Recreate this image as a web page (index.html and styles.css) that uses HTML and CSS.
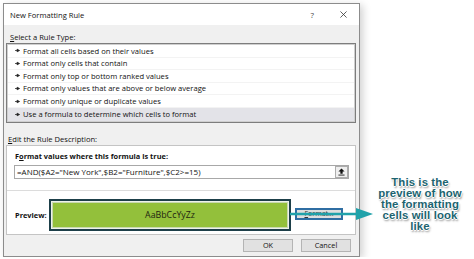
FILE: index.html
```html
<!DOCTYPE html>
<html lang="en">
<head>
  <meta charset="UTF-8">
  <title>New Formatting Rule</title>
  <link rel="stylesheet" href="styles.css">
</head>
<body>
  <div class="stage">
    <div class="dialog">
      <div class="titlebar">
        <span class="title">New Formatting Rule</span>
        <span class="help">?</span>
        <svg class="close" viewBox="0 0 8 8"><path d="M0.5 0.5L7.5 7.5M7.5 0.5L0.5 7.5"/></svg>
      </div>

      <div class="content">
        <div class="label"><u>S</u>elect a Rule Type:</div>
        <ul class="rule-list">
          <li class="rule"><svg class="bullet" viewBox="0 0 6 5"><path d="M0 2.5h3"/><polygon points="2.5,0.9 5.5,2.5 2.5,4.1"/></svg>Format all cells based on their values</li>
          <li class="rule"><svg class="bullet" viewBox="0 0 6 5"><path d="M0 2.5h3"/><polygon points="2.5,0.9 5.5,2.5 2.5,4.1"/></svg>Format only cells that contain</li>
          <li class="rule"><svg class="bullet" viewBox="0 0 6 5"><path d="M0 2.5h3"/><polygon points="2.5,0.9 5.5,2.5 2.5,4.1"/></svg>Format only top or bottom ranked values</li>
          <li class="rule"><svg class="bullet" viewBox="0 0 6 5"><path d="M0 2.5h3"/><polygon points="2.5,0.9 5.5,2.5 2.5,4.1"/></svg>Format only values that are above or below average</li>
          <li class="rule"><svg class="bullet" viewBox="0 0 6 5"><path d="M0 2.5h3"/><polygon points="2.5,0.9 5.5,2.5 2.5,4.1"/></svg>Format only unique or duplicate values</li>
          <li class="rule selected"><svg class="bullet" viewBox="0 0 6 5"><path d="M0 2.5h3"/><polygon points="2.5,0.9 5.5,2.5 2.5,4.1"/></svg>Use a formula to determine which cells to format</li>
        </ul>

        <div class="label edit-label"><u>E</u>dit the Rule Description:</div>
        <div class="group">
          <div class="formula-section">
            <div class="group-title">F<u>o</u>rmat values where this formula is true:</div>
            <div class="formula-input">
              <span class="formula">=AND($A2="New York",$B2="Furniture",$C2&gt;=15)</span>
              <span class="ref-btn">
                <svg viewBox="0 0 8 9"><polygon points="4,0.5 7.5,4 5.3,4 5.3,6.5 2.7,6.5 2.7,4 0.5,4"/><rect x="0.5" y="7.5" width="7" height="1"/></svg>
              </span>
            </div>
          </div>
          <div class="preview-section">
            <span class="preview-label">Preview:</span>
            <div class="preview-box"><div class="preview-sample">AaBbCcYyZz</div></div>
            <span class="format-btn"><u>F</u>ormat...</span>
          </div>
        </div>

        <div class="actions">
          <span class="btn">OK</span>
          <span class="btn">Cancel</span>
        </div>
      </div>
    </div>

    <div class="callout">This is the<br>preview of how<br>the formatting<br>cells will look<br>like</div>

    <svg class="pointer" viewBox="0 0 84 16"><path d="M0 8H70"/><polygon points="66,2 83,8 66,14"/></svg>
  </div>
</body>
</html>
```
FILE: styles.css
```css
body {
  margin: 0;
  background: #fff;
  font-family: "Open Sans", "Noto Sans", sans-serif;
  color: #111;
}

.stage {
  position: relative;
  display: flex;
  padding: 3px 0 0 3px;
}

.dialog {
  width: 355px;
  height: 252px;
  border: 1px solid #8c8c8c;
  background: #f0f0f0;
  box-shadow: 3px 2px 8px rgba(0, 0, 0, 0.18);
  display: flex;
  flex-direction: column;
}

.titlebar {
  height: 21px;
  background: #fff;
  display: flex;
  align-items: center;
  padding-left: 6px;
  font-size: 7.6px;
}

.title {
  flex: 1;
}

.help {
  font-size: 8px;
  color: #444;
  margin-right: 26px;
}

.close {
  width: 7px;
  height: 7px;
  margin-right: 12px;
  stroke: #333;
  stroke-width: 0.9;
  fill: none;
}

.content {
  flex: 1;
  padding: 6px 3px 0 2px;
  font-size: 7.6px;
}

.label {
  height: 12px;
  line-height: 12px;
  padding-left: 4px;
}

.edit-label {
  margin-top: 10px;
  padding-left: 2px;
}

.rule-list {
  list-style: none;
  margin: 0;
  background: #fff;
  border: 1px solid #7d7d7d;
  box-shadow: inset 0 0 0 1px #cfcfcf;
  padding: 1px;
}

.rule {
  height: 12.6px;
  line-height: 12.6px;
  display: flex;
  align-items: center;
  padding-left: 7px;
  border-bottom: 1px solid #f3f3f3;
  box-sizing: border-box;
}

.rule:last-child {
  border-bottom: none;
}

.rule.selected {
  background: #e3e3e8;
}

.bullet {
  width: 5px;
  height: 5px;
  margin-right: 3px;
  stroke: #222;
  stroke-width: 0.9;
  fill: #222;
}

.group {
  background: #fff;
  border: 1px solid #c4c4c4;
  height: 88px;
  display: flex;
  flex-direction: column;
}

.formula-section {
  padding: 4px 6px 11px 7px;
  border-bottom: 1px solid #dcdcdc;
}

.group-title {
  font-weight: 700;
  font-size: 7.4px;
  line-height: 12px;
  padding-left: 1px;
}

.formula-input {
  margin-top: 3px;
  height: 14px;
  border: 1px solid #a8a8a8;
  box-sizing: border-box;
  display: flex;
  align-items: center;
  padding-left: 2px;
  font-size: 8px;
}

.formula {
  flex: 1;
}

.ref-btn {
  width: 13px;
  height: 12px;
  border: 1px solid #adadad;
  background: #efefef;
  box-sizing: border-box;
  display: flex;
  align-items: center;
  justify-content: center;
}

.ref-btn svg {
  width: 7px;
  height: 8px;
  fill: #111;
}

.preview-section {
  flex: 1;
  display: flex;
  align-items: center;
  padding: 6px 0 0 8px;
}

.preview-label {
  font-weight: 700;
  font-size: 7.4px;
  width: 34px;
}

.preview-box {
  width: 242px;
  height: 32px;
  box-sizing: border-box;
  border: 2px solid #1d3f49;
  padding: 1px;
  background: #eef2ea;
}

.preview-sample {
  height: 100%;
  background: #93c03b;
  border: 1px solid #c9d9b0;
  box-sizing: border-box;
  display: flex;
  align-items: center;
  justify-content: center;
  font-size: 8.8px;
  color: #1e2410;
}

.format-btn {
  margin-left: 4px;
  margin-top: -3px;
  width: 48px;
  height: 12px;
  box-sizing: border-box;
  border: 2px solid #2f6ea3;
  background: #dedede;
  font-size: 7px;
  line-height: 8px;
  text-align: center;
  color: #333;
}

.actions {
  display: flex;
  justify-content: flex-end;
  gap: 8px;
  padding: 4px 5px 0 0;
}

.btn {
  width: 50px;
  height: 13px;
  box-sizing: border-box;
  border: 1px solid #b4b4b4;
  background: #e1e1e1;
  text-align: center;
  line-height: 11px;
  font-size: 7.3px;
}

.callout {
  flex: 1;
  align-self: flex-start;
  margin-top: 174px;
  padding-left: 6px;
  text-align: center;
  font-family: "Liberation Sans", Arial, sans-serif;
  font-weight: 700;
  font-size: 11.4px;
  line-height: 11px;
  letter-spacing: 0.1px;
  color: #1c6470;
  text-shadow: -1px 0 #fff, 1px 0 #fff, 0 -1px #fff, 0 1px #fff, 1px 2px 2px rgba(0, 0, 0, 0.45);
}

.pointer {
  position: absolute;
  left: 290px;
  top: 206px;
  width: 84px;
  height: 16px;
  stroke: #20a2aa;
  stroke-width: 2.4;
  fill: #20a2aa;
}

.pointer polygon {
  stroke: none;
}
```
